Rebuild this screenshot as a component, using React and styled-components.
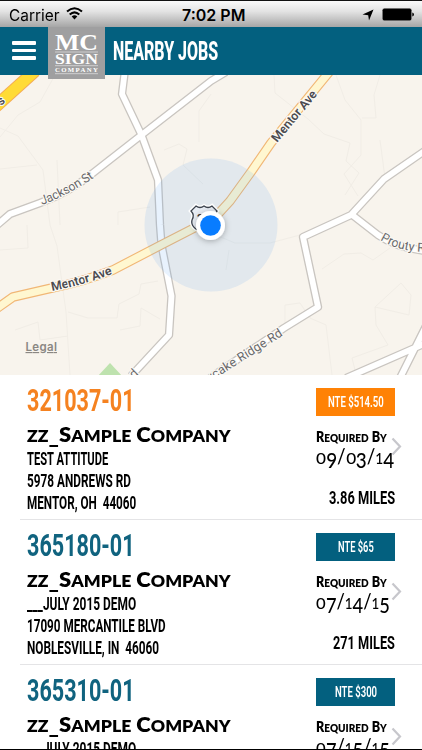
import React, { useLayoutEffect, useRef, useState } from "react";
import styled, { createGlobalStyle } from "styled-components";

const TEAL = "#03607f";
const ORANGE = "#ff8205";

const GlobalStyle = createGlobalStyle`
  body {
    margin: 0;
    background: #fff;
  }

  * {
    box-sizing: border-box;
  }
`;

const Screen = styled.div`
  display: flex;
  flex-direction: column;
  width: 422px;
  height: 750px;
  overflow: hidden;
  border-bottom: 1px solid #000;
  background: #fff;
  color: #000;
  font-family: Roboto, "Liberation Sans", sans-serif;
`;

const FitBox = styled.span`
  display: block;
  width: ${(props) => props.$width}px;
  white-space: pre;
`;

const FitText = styled.span`
  display: inline-block;
  transform-origin: 0 50%;
`;

// squeezes or stretches a line of text to an exact width
const Fit = ({ width, children }) => {
  const ref = useRef(null);
  const [scale, setScale] = useState(1);

  useLayoutEffect(() => {
    setScale(width / ref.current.offsetWidth);
  }, [width, children]);

  return (
    <FitBox $width={width}>
      <FitText ref={ref} style={{ transform: `scaleX(${scale})` }}>
        {children}
      </FitText>
    </FitBox>
  );
};

const StatusBar = styled.div`
  display: flex;
  align-items: center;
  flex: none;
  height: 27px;
  padding: 1px 8px 0 9px;
  border-top: 1px solid #111;
  background: linear-gradient(#fafafa, #e3e3e3 40%, #a6a6a6);
  font-family: Inter, sans-serif;
  font-size: 16px;
  line-height: 22px;
`;

const Wifi = styled.svg`
  margin: 0 0 2px 7px;
`;

const Clock = styled.div`
  margin-left: 99px;
  font-weight: 600;
`;

const StatusIcons = styled.div`
  display: flex;
  align-items: center;
  gap: 8px;
  margin-left: auto;
`;

const Header = styled.header`
  display: flex;
  align-items: center;
  flex: none;
  height: 48px;
  padding-left: 12px;
  background: ${TEAL};
  color: #fff;
`;

const MenuButton = styled.button`
  display: flex;
  flex-direction: column;
  gap: 4px;
  width: 24px;
  padding: 0 0 1px;
  border: 0;
  background: none;
`;

const MenuLine = styled.span`
  height: 3.4px;
  border-radius: 1px;
  background: #fff;
`;

const Logo = styled.svg`
  position: relative;
  z-index: 1;
  align-self: flex-start;
  flex: none;
  margin-left: 12px;
`;

const Title = styled.h1`
  margin: 0 0 0 8px;
  font-size: 26px;
  font-weight: 800;
  line-height: 46px;
`;

const Map = styled.svg`
  display: block;
  flex: none;
  background: #f8f4ed;
`;

const Row = styled.div`
  position: relative;
  display: flex;
  justify-content: space-between;
  flex: none;
  height: 145px;
  margin-left: 20px;
  padding: 10px 27px 0 7px;
  border-bottom: 1px solid #e4e4e6;
`;

const JobNumber = styled.div`
  color: ${(props) => props.$color};
  font-size: 31px;
  font-weight: 700;
  line-height: 32px;
`;

const Company = styled.div`
  margin-top: 4px;
  font-family: Lato, sans-serif;
  font-size: 20px;
  font-weight: 800;
  line-height: 26px;
`;

const SmallCap = styled.span`
  font-size: 0.8em;
  text-transform: uppercase;
`;

const Underscore = styled.span`
  position: relative;
  top: 2px;
`;

const Address = styled.div`
  position: relative;
  top: -1px;
  font-size: 18.5px;
  font-weight: 700;
  line-height: 22px;
`;

const Side = styled.div`
  display: flex;
  flex-direction: column;
  align-items: flex-end;
  width: 79px;
  padding-top: 3px;
`;

const Badge = styled.div`
  display: flex;
  justify-content: center;
  width: 79px;
  height: 28px;
  background: ${(props) => props.$color};
  color: #fff;
  font-size: 15px;
  font-weight: 600;
  line-height: 28px;
`;

const Required = styled.div`
  align-self: flex-start;
  margin-top: 12px;
  font-family: Lato, sans-serif;
  font-size: 14px;
  font-weight: 800;
  line-height: 18px;
`;

const DueDate = styled.div`
  display: flex;
  align-self: flex-start;
  height: 20px;
  margin-top: -1px;
  font-family: Lato, sans-serif;
  font-size: 20.5px;
  font-weight: 500;
  line-height: 20px;
`;

const Digit = styled.span`
  display: inline-block;
  margin: 0 ${(props) => (props.$round ? 1.2 : 0)}px;
  transform: translateY(${(props) => (props.$low ? 4 : 0)}px) scaleX(${(props) => (props.$round ? 1.25 : 1)});
  font-size: ${(props) => (props.$small ? 15 : 20.5)}px;
`;

const Miles = styled.div`
  margin-top: 20px;
  font-size: 18.5px;
  font-weight: 700;
  line-height: 24px;
`;

const Chevron = styled.svg`
  position: absolute;
  top: 62px;
  right: 20px;
`;

const jobs = [
  {
    id: "321037-01",
    color: ORANGE,
    ink: "#f58220",
    nte: ["NTE $514.50", 56],
    lines: [
      ["TEST ATTITUDE", 81],
      ["5978 ANDREWS RD", 104],
      ["MENTOR, OH  44060", 109],
    ],
    due: ["09/03/14", 78],
    miles: ["3.86 MILES", 66],
  },
  {
    id: "365180-01",
    color: TEAL,
    ink: "#10637f",
    nte: ["NTE $65", 36],
    lines: [
      ["___JULY 2015 DEMO", 109],
      ["17090 MERCANTILE BLVD", 139],
      ["NOBLESVILLE, IN  46060", 132],
    ],
    due: ["07/14/15", 74],
    miles: ["271 MILES", 62],
  },
  {
    id: "365310-01",
    color: TEAL,
    ink: "#10637f",
    nte: ["NTE $300", 42],
    lines: [["___JULY 2015 DEMO", 109]],
    due: ["07/15/15", 74],
    miles: null,
  },
];

const OldStyleDate = ({ value }) =>
  value.split("").map((char, i) => (
    <Digit
      key={i}
      $round={char === "0"}
      $small={"012".includes(char)}
      $low={"34579".includes(char)}
    >
      {char}
    </Digit>
  ));

const whiteRoads = [
  "M125 70L122 94L141.500 135L158 180L160 225L161.500 245L171.500 296L169 335L131 376",
  "M226 72L211 81L141.500 135L93 173Q70 192 40 203L10 214L-4 226",
  "M426 150L384 179L351 215L303 237L318 307L284 328L210 378",
  "M351 214L378 235Q397 248 426 251",
  "M426 343L346 378M426 326L400 378",
];

const minorRoads = [
  "M55 75L40 102L18 115L0 137",
  "M0 128L18 136L43 170L50 225L57 246L66 312L70 375",
  "M0 169L37 165M60 225L57 160",
  "M0 250L28 248L27 225M118 225V212L150 207",
  "M68 312L88 318H117L119 304L139 294L141 284L158 281",
  "M164 150L179 144L187 149L183 165L203 184M211 94L199 111V142",
  "M274 75L275 93L308 119L324 134L350 143L346 161L359 173L345 195",
  "M336 75L345 100L361 120V155L344 174L358 196",
  "M380 75L374 95L376 118L362 118M380 140L385 178",
  "M322 269L344 254L361 253L373 260L390 248",
  "M375 307L401 283L411 295L409 315L375 307L376 325L388 345L352 358L355 370",
  "M285 325V305L300 303L310 318L326 325L332 375",
  "M211 233L235 243H270L300 235M226 270L229 250",
  "M15 330L38 322L40 340L68 336M120 330L140 326L141 308L160 319",
];

const MENTOR =
  "M-4 309L13 297L52 288Q82 282 113 270L161 245L200 225L219 213L230 201L251 172L271 143L330 71";

const SHIELD =
  "M196 206Q200 209 204 206Q208 209 212 206L217 211Q214 215 217 220Q219 228 204 233Q190 228 192 220Q195 215 191 211Z";

const NearbyMap = () => (
  <Map width="422" height="300" viewBox="0 75 422 300">
    <defs>
      <path id="jackson" d="M42 205Q69 195 98 175" />
      <path id="mentorLow" d="M52 291Q84 285 115 273" />
      <path id="mentorHigh" d="M277 143Q299 117 318 94" />
      <path id="ridge" d="M210 382L219 376L290 331" />
      <path id="prouty" d="M380 240Q401 253 434 252" />
      <filter id="soft" x="-50%" y="-50%" width="200%" height="200%">
        <feDropShadow dx="0" dy="1" stdDeviation="3" floodOpacity="0.3" />
      </filter>
    </defs>
    <g fill="none" stroke="#f1ede6">
      {minorRoads.map((d) => (
        <path key={d} d={d} />
      ))}
    </g>
    <path d="M97 377L110 363L123 377Z" fill="#bee2ae" />
    <g fill="none" stroke="#c9c5c0" strokeWidth="8.400" strokeLinejoin="round">
      {whiteRoads.map((d) => (
        <path key={d} d={d} />
      ))}
    </g>
    <g fill="none" stroke="#fff" strokeWidth="5.800" strokeLinejoin="round">
      {whiteRoads.map((d) => (
        <path key={d} d={d} />
      ))}
    </g>
    <g fill="none" strokeLinejoin="round">
      <path d={MENTOR} stroke="#f1b776" strokeWidth="9.600" />
      <path d={MENTOR} stroke="#fff7d0" strokeWidth="7.400" />
      <path d="M35 71L-5 107" stroke="#f3ab55" strokeWidth="13" />
      <path d="M35 71L-5 107" stroke="#ffdb36" strokeWidth="11" />
    </g>
    <circle cx="211" cy="225" r="66.500" fill="#4f9cf2" fillOpacity="0.130" />
    <g
      fill="#68686b"
      stroke="#fbf8f3"
      strokeWidth="2.500"
      strokeLinejoin="round"
      paintOrder="stroke"
      fontSize="12.500"
      fontFamily="Roboto, sans-serif"
    >
      <text>
        <textPath href="#jackson" textLength="59">
          Jackson St
        </textPath>
      </text>
      <text>
        <textPath href="#ridge" textLength="87">
          ycake Ridge Rd
        </textPath>
      </text>
      <text>
        <textPath href="#prouty">Prouty Rd</textPath>
      </text>
      <text transform="translate(134 379) rotate(-45)">d</text>
      <g fill="#4b4b50" fontWeight="600">
        <text>
          <textPath href="#mentorLow" textLength="63">
            Mentor Ave
          </textPath>
        </text>
        <text>
          <textPath href="#mentorHigh" textLength="63">
            Mentor Ave
          </textPath>
        </text>
        <text transform="translate(1 106) rotate(-42)">s</text>
      </g>
    </g>
    <path d={SHIELD} fill="#fff" stroke="#fff" strokeWidth="4" />
    <path d={SHIELD} fill="#e8edf4" stroke="#3c434d" strokeWidth="1.300" />
    <text x="197" y="222" fontSize="11" fontWeight="700" fontFamily="Roboto, sans-serif" fill="#333">
      20
    </text>
    <circle cx="210.500" cy="225.500" r="14.500" fill="#fff" filter="url(#soft)" />
    <circle cx="210.500" cy="225.500" r="10.300" fill="#087cff" />
    <text
      x="25.500"
      y="351"
      textLength="31.500"
      fontSize="11.500"
      fontWeight="600"
      fontFamily="Inter, sans-serif"
      fill="#8a8783"
      textDecoration="underline"
    >
      Legal
    </text>
  </Map>
);

const Job = ({ job }) => (
  <Row>
    <div>
      <JobNumber $color={job.ink}>
        <Fit width={108}>{job.id}</Fit>
      </JobNumber>
      <Company>
        <Fit width={204}>
          <SmallCap>zz</SmallCap>
          <Underscore>_</Underscore>S<SmallCap>ample</SmallCap> C
          <SmallCap>ompany</SmallCap>
        </Fit>
      </Company>
      {job.lines.map(([text, width]) => (
        <Address key={text}>
          <Fit width={width}>{text}</Fit>
        </Address>
      ))}
    </div>
    <Side>
      <Badge $color={job.color}>
        <Fit width={job.nte[1]}>{job.nte[0]}</Fit>
      </Badge>
      <Required>
        <Fit width={71}>
          R<SmallCap>equired</SmallCap> B<SmallCap>y</SmallCap>
        </Fit>
      </Required>
      <DueDate>
        <Fit width={job.due[1]}>
          <OldStyleDate value={job.due[0]} />
        </Fit>
      </DueDate>
      {job.miles && (
        <Miles>
          <Fit width={job.miles[1]}>{job.miles[0]}</Fit>
        </Miles>
      )}
    </Side>
    <Chevron width="11" height="19" viewBox="0 0 11 19">
      <path d="M1.500 1.500L9 9.500L1.500 17.500" fill="none" stroke="#c7c7cc" strokeWidth="2.200" />
    </Chevron>
  </Row>
);

const App = () => (
  <Screen>
    <GlobalStyle />
    <StatusBar>
      <Fit width={50}>Carrier</Fit>
      <Wifi width="17" height="13" viewBox="0 0 17 13">
        <g fill="none" stroke="#000" strokeWidth="2">
          <path d="M1 4.600Q8.500 -2.200 16 4.600" />
          <path d="M3.700 7.600Q8.500 3.200 13.300 7.600" />
        </g>
        <path d="M5.700 9.500Q8.500 7 11.300 9.500L8.500 12.500Z" />
      </Wifi>
      <Clock>
        <Fit width={63}>7:02 PM</Fit>
      </Clock>
      <StatusIcons>
        <svg width="12" height="12" viewBox="0 0 12 12">
          <path d="M11.500 0.500L7 11.500L6.200 6.200L0.500 5.600Z" />
        </svg>
        <svg width="32" height="13" viewBox="0 0 32 13">
          <rect x="0.300" y="0.300" width="29.400" height="12.400" rx="2" fill="#777" />
          <rect x="0.800" y="0.800" width="28.400" height="11.400" rx="1.500" />
          <path d="M30.300 4.500Q32 4.800 32 6.500T30.300 8.500Z" />
        </svg>
      </StatusIcons>
    </StatusBar>
    <Header>
      <MenuButton aria-label="Menu">
        <MenuLine />
        <MenuLine />
        <MenuLine />
      </MenuButton>
      <Logo width="57" height="52" viewBox="0 0 57 52">
        <rect width="57" height="52" fill="#9f9fa0" />
        <g fill="#fff" fontFamily="Liberation Serif, serif" fontWeight="700">
          <text x="7" y="23" fontSize="23.500" textLength="43" lengthAdjust="spacingAndGlyphs">
            MC
          </text>
          <text x="7" y="37" fontSize="15" textLength="43" lengthAdjust="spacingAndGlyphs">
            SIGN
          </text>
          <text x="7" y="44.700" fontSize="6.800" textLength="43">
            COMPANY
          </text>
        </g>
        <path d="M7 25H50M7 38.700H50M7 46.700H50" stroke="#e4e4e4" strokeWidth="0.700" />
      </Logo>
      <Title>
        <Fit width={105}>NEARBY JOBS</Fit>
      </Title>
    </Header>
    <NearbyMap />
    {jobs.map((job) => (
      <Job key={job.id} job={job} />
    ))}
  </Screen>
);

export default App;
